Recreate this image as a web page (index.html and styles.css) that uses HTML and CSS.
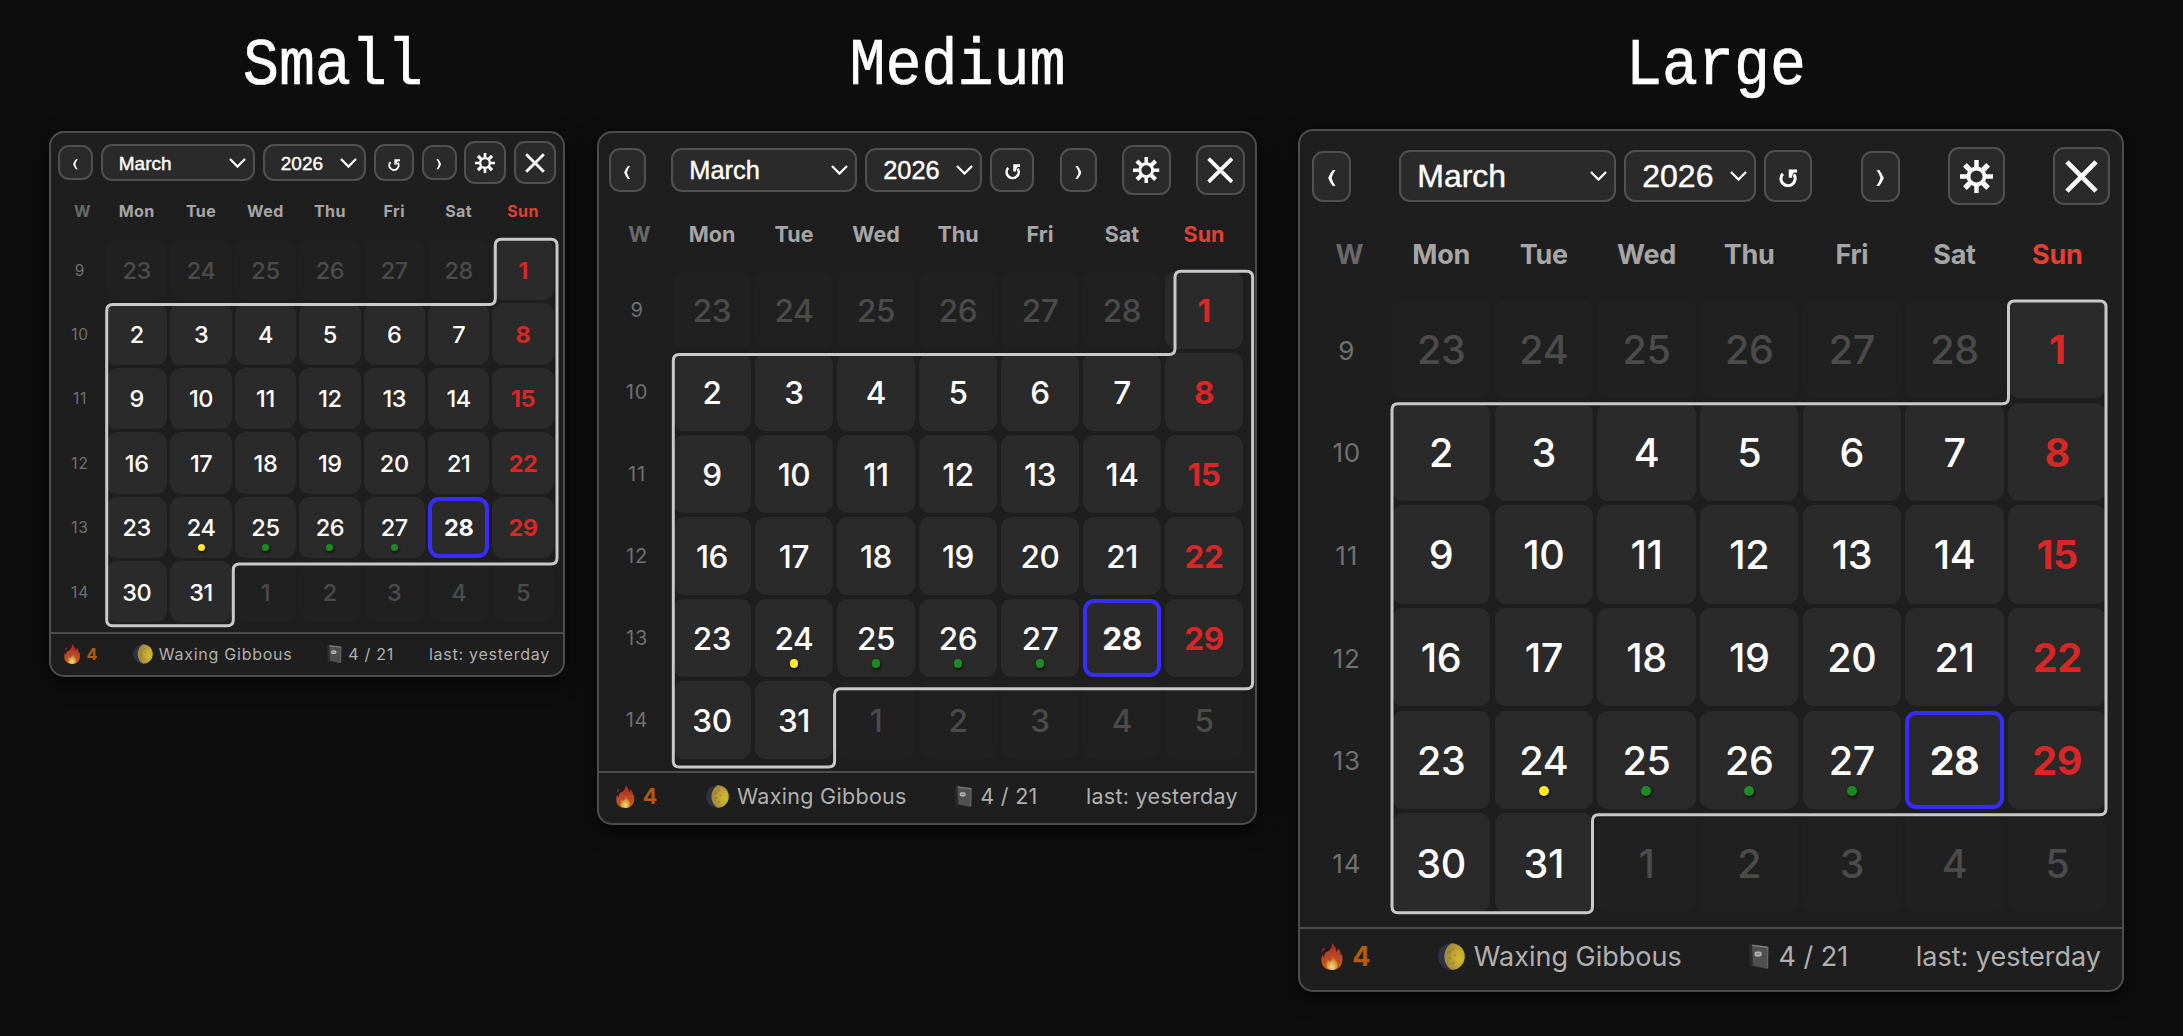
FILE: index.html
```html
<!DOCTYPE html>
<html lang="en">
<head>
  <meta charset="UTF-8" />
  <meta name="viewport" content="width=device-width, initial-scale=1.0"/>
  <title>Calendar sizes</title>
  <link rel="stylesheet" href="styles.css">
</head>
<body>
  <!-- Icon sprite -->
  <svg class="sprite" aria-hidden="true">
    <defs>
      <linearGradient id="flame-fill" x1="0" y1="0" x2="0" y2="1">
        <stop offset="0" stop-color="#a82316"/>
        <stop offset="0.45" stop-color="#b8432a"/>
        <stop offset="0.75" stop-color="#c4501c"/>
        <stop offset="1" stop-color="#b8561c"/>
      </linearGradient>
      <radialGradient id="flame-core" cx="0.5" cy="0.8" r="0.6">
        <stop offset="0" stop-color="#e8dc8a"/>
        <stop offset="0.6" stop-color="#d9a23a"/>
        <stop offset="1" stop-color="#c2602a"/>
      </radialGradient>
      <radialGradient id="moon-fill" cx="0.75" cy="0.55" r="0.6">
        <stop offset="0" stop-color="#d2bd2c"/>
        <stop offset="0.6" stop-color="#bfa234"/>
        <stop offset="1" stop-color="#a88a3c"/>
      </radialGradient>
    </defs>
    <symbol id="icon-prev" viewBox="0 0 8 16">
      <path d="M7.5 0H4.8Q1.6 4 .2 8q1.4 4 4.6 8h2.7Q4.6 12 3.6 8 4.6 4 7.5 0z" fill="currentColor"/>
    </symbol>
    <symbol id="icon-next" viewBox="0 0 8 16">
      <path d="M.5 0h2.7Q6.4 4 7.8 8 6.4 12 3.2 16H.5Q3.4 12 4.4 8 3.4 4 .5 0z" fill="currentColor"/>
    </symbol>
    <symbol id="icon-reset" viewBox="0 0 18 18">
      <path d="M3.8 4.6A7 7 0 1 0 14.6 5.4" fill="none" stroke="currentColor" stroke-width="3"/>
      <path d="M9.6.4H18v3h-3.4q-1.6 1.6-1.9 5.2H9.6z" fill="currentColor"/>
    </symbol>
    <symbol id="icon-gear" viewBox="-16.5 -16.5 33 33">
      <circle r="8" fill="none" stroke="currentColor" stroke-width="3.8"/>
      <g stroke="currentColor" stroke-width="4.4">
        <path d="M0-16.5V-8M0 8v8.5M-16.5 0H-8M8 0h8.5"/>
        <path d="M-11.6-11.6l5.2 5.2M6.4 6.4l5.2 5.2M11.6-11.6L6.4-6.4M-6.4 6.4l-5.2 5.2" stroke-width="5.2"/>
      </g>
    </symbol>
    <symbol id="icon-close" viewBox="0 0 34 34">
      <path d="M2 2l30 30M32 2L2 32" fill="none" stroke="currentColor" stroke-width="4.8"/>
    </symbol>
    <symbol id="icon-chevron" viewBox="0 0 17 10">
      <path d="M1 1l7.5 7.6L16 1" fill="none" stroke="currentColor" stroke-width="2.2"/>
    </symbol>
    <symbol id="icon-flame" viewBox="0 0 22 27">
      <path d="M11 0c3 3 4.200 5.500 4.500 9 1-1 1.300-2.500 1.200-4C20 8 19.500 10 19.800 12.500c.3-.4.8-1 1-1.700C22.500 17 21.500 27 11 27S-1 18.500 1.200 11.500c.4 1.500 1 2.500 2 3C2.500 10 5 9.500 7.500 8 10 6 11 4 11 0z" fill="url(#flame-fill)"/>
      <path d="M2 5c1.200-.5 2.500.2 2 1.600C3.200 8 1.500 8 1.200 9.600.5 7.500.8 6 2 5z" fill="#8c2018"/>
      <path d="M11.500 12c.5 4 5.500 5.500 5.300 10-.2 3.300-2.500 5-5.800 5s-6-1.800-6-5.200c0-2.500 1.200-3.800 1.300-5.800 1 .6 1.600 1.700 1.800 3 2-1.500 3.200-4 3.400-7z" fill="url(#flame-core)"/>
    </symbol>
    <symbol id="icon-moon" viewBox="0 0 27 27">
      <circle cx="13.500" cy="13.500" r="13.300" fill="#2c3444"/>
      <path d="M13.500.2a13.300 13.300 0 0 1 0 26.600C4 21 4 6 13.500.2z" fill="url(#moon-fill)"/>
      <g fill="#94792c" opacity="0.55">
        <circle cx="11.500" cy="9" r="2"/>
        <circle cx="15.500" cy="6.500" r="1.300"/>
        <circle cx="12" cy="15" r="1.500"/>
        <circle cx="17" cy="12" r="1.200"/>
        <circle cx="15" cy="20" r="1.600"/>
      </g>
    </symbol>
    <symbol id="icon-book" viewBox="0 0 20 25">
      <path d="M0 1l3-1 16 2.500L20 24l-3 1L1 22z" fill="#2c2c2c"/>
      <path d="M3 .8l16 2-.5 21.700L4 21.500z" fill="#505050"/>
      <path d="M3 .8l16 2v1.400L3 2.200z" fill="#858585"/>
      <path d="M18 3.500h1.200l-.6 20.500H17.600z" fill="#666"/>
      <rect x="5.500" y="7.500" width="7" height="5" rx="2" fill="#b5b5b5"/>
      <path d="M7 10h4" stroke="#666" stroke-width="1"/>
    </symbol>
  </svg>

  <main class="sizes" id="sizes"></main>

  <script src="script.js"></script>
</body>
</html>
```
FILE: styles.css
```css
* {
  box-sizing: border-box;
}

body {
  margin: 0;
  min-height: 1036px;
  background: #0d0d0d;
  color: #fff;
  font-family: Inter, "Liberation Sans", sans-serif;
  overflow: hidden;
}

.sprite {
  position: absolute;
  width: 0;
  height: 0;
}

.sizes {
  display: flex;
  align-items: flex-start;
  padding-left: 49px;
}

/* Sizes */
.small {
  --width: 516px;
  --title-shift: 52px;
  --card-top: 0px;
  --toolbar: 59px;
  --toolbar-pad: 7px;
  --select-font: 19px;
  --select-drop: 1px;
  --nav: 35px;
  --nav-h: 35px;
  --control-h: 37px;
  --month: 154px;
  --year: 103px;
  --reset: 40px;
  --icon-btn: 42px;
  --arrow: 5.2px;
  --reset-icon: 12px;
  --gear: 20px;
  --weekday-h: 47px;
  --weekday-pad: 9px;
  --label-font: 16px;
  --week-font: 15.5px;
  --week-col: 55px;
  --cell: 61.4px;
  --gap: 3px;
  --day-font: 23.5px;
  --day-drop: 1px;
  --dot: 7px;
  --dot-bottom: 7px;
  --body-gap: 9.5px;
  --footer-h: 43px;
  --footer-pad: 13px;
  --footer-lift: 0px;
  --emoji: 20px;
  --emoji-gap: 6px;
  --spacing: 0.75px;
}

.medium {
  --width: 660px;
  --title-shift: 61px;
  --card-top: 0px;
  --toolbar: 74px;
  --toolbar-pad: 10px;
  --select-font: 25.4px;
  --select-drop: 2px;
  --nav: 37px;
  --nav-h: 44px;
  --control-h: 44px;
  --month: 186px;
  --year: 117px;
  --reset: 44px;
  --icon-btn: 49px;
  --arrow: 6.5px;
  --reset-icon: 15.5px;
  --gear: 26.5px;
  --weekday-h: 64px;
  --weekday-pad: 10px;
  --label-font: 21.5px;
  --week-font: 20px;
  --week-col: 74px;
  --cell: 78px;
  --gap: 4px;
  --day-font: 31.5px;
  --day-drop: 0px;
  --dot: 8.5px;
  --dot-bottom: 9.5px;
  --body-gap: 12px;
  --footer-h: 52px;
  --footer-pad: 17px;
  --footer-lift: 4px;
  --emoji: 23px;
  --emoji-gap: 8px;
  --spacing: 0.3px;
  margin-left: 32px;
}

.large {
  --width: 826px;
  --title-shift: 10px;
  --card-top: -2px;
  --toolbar: 90px;
  --toolbar-pad: 12px;
  --select-font: 32px;
  --select-drop: 0px;
  --nav: 39px;
  --nav-h: 51px;
  --control-h: 52px;
  --month: 217px;
  --year: 132px;
  --reset: 48px;
  --icon-btn: 57px;
  --arrow: 8px;
  --reset-icon: 18.3px;
  --gear: 33px;
  --weekday-h: 79px;
  --weekday-pad: 13px;
  --label-font: 27px;
  --week-font: 26px;
  --week-col: 92px;
  --cell: 98.2px;
  --gap: 4.5px;
  --day-font: 39.5px;
  --day-drop: 2px;
  --dot: 10px;
  --dot-bottom: 13px;
  --body-gap: 15px;
  --footer-h: 63px;
  --footer-pad: 21px;
  --footer-lift: 6px;
  --emoji: 27px;
  --emoji-gap: 9px;
  --spacing: 0px;
  margin-left: 41px;
}

.size {
  width: var(--width);
}

/* Title */
.title {
  height: 131px;
  margin: 0 0 var(--card-top);
  padding-left: var(--title-shift);
  font: 400 60px/100px "Liberation Mono", monospace;
  -webkit-text-stroke: 0.6px #fff;
  text-align: center;
  transform: scaleY(1.12);
  transform-origin: 0 83px;
  padding-top: 18px;
}

/* Card */
.calendar {
  border: 2px solid #4d4d4d;
  border-radius: 15px;
  background: #1e1e1e;
  box-shadow: 0 6px 20px rgba(0, 0, 0, 0.6);
}

/* Toolbar */
.toolbar {
  display: flex;
  align-items: center;
  justify-content: space-between;
  height: var(--toolbar);
  padding: 0 var(--toolbar-pad);
}

.picker {
  display: flex;
  align-items: center;
  gap: 8px;
}

.control {
  display: flex;
  align-items: center;
  justify-content: center;
  height: var(--control-h);
  border: 2px solid #505050;
  border-radius: 11px;
  background: #2a2a2a;
  color: #fff;
}

.nav {
  width: var(--nav);
  height: var(--nav-h);
  padding-top: 4px;
}
.nav svg {
  width: var(--arrow);
  height: calc(var(--arrow) * 2);
}

.select {
  justify-content: space-between;
  padding: 0 7px 0 16px;
  font-family: "Liberation Sans", Arial, sans-serif;
  font-size: var(--select-font);
  line-height: 1;
  -webkit-text-stroke: 0.4px #fff;
}
.select span {
  padding-top: var(--select-drop);
}
.select svg {
  width: 17px;
  height: 10px;
}

.month {
  width: var(--month);
}
.year {
  width: var(--year);
}

.reset {
  width: var(--reset);
  padding-top: 4px;
}
.reset svg {
  width: var(--reset-icon);
  height: var(--reset-icon);
}

.icon-btn {
  width: var(--icon-btn);
  height: calc(var(--icon-btn) + 1px);
}
.icon-btn svg {
  width: var(--gear);
  height: var(--gear);
}

/* Weekday labels */
.weekdays,
.grid {
  display: grid;
  grid-template-columns: calc(var(--week-col) - var(--gap)) repeat(7, var(--cell));
  column-gap: var(--gap);
}

.weekdays {
  align-items: center;
  height: var(--weekday-h);
  padding-bottom: var(--weekday-pad);
  color: #a6a6a6;
  font-size: var(--label-font);
  font-weight: 700;
  letter-spacing: calc(var(--spacing) - 0.3px);
  text-align: center;
}
.weekdays .week {
  color: #696969;
  padding-left: 11px;
}
.weekdays .sunday {
  color: #e34035;
}

/* Day grid */
.grid {
  position: relative;
  grid-auto-rows: var(--cell);
  row-gap: var(--gap);
}

.week-number {
  display: flex;
  align-items: center;
  justify-content: center;
  padding-left: 6px;
  padding-top: var(--day-drop);
  color: #707070;
  font-size: var(--week-font);
  letter-spacing: 0.8px;
}

.day {
  position: relative;
  display: flex;
  align-items: center;
  justify-content: center;
  padding-top: var(--day-drop);
  border-radius: 11px;
  background: #2a2a2a;
  font-size: var(--day-font);
  font-weight: 500;
  letter-spacing: -0.4px;
}
.day.other {
  background: #202020;
  color: #4b4b4b;
}
.day.sunday {
  color: #d92626;
  font-weight: 700;
}
.day.sunday.other {
  color: #4b4b4b;
  font-weight: 500;
}
.day.today {
  border: 4px solid #372dff;
  font-weight: 700;
}

.dot {
  position: absolute;
  bottom: var(--dot-bottom);
  left: calc(50% - var(--dot) / 2);
  width: var(--dot);
  height: var(--dot);
  border-radius: 50%;
  background: #1d8b25;
  box-shadow: 1px 2px 3px rgba(0, 0, 0, 0.6);
}
.dot.yellow {
  background: #ffe72e;
}

/* Month outline */
.outline {
  position: absolute;
  top: 0;
  left: var(--week-col);
  width: 1px;
  height: 1px;
  overflow: visible;
  fill: none;
  stroke: #c9c9c9;
  stroke-width: 3;
  pointer-events: none;
}

/* Footer */
.footer {
  display: flex;
  align-items: center;
  justify-content: space-between;
  height: var(--footer-h);
  margin-top: var(--body-gap);
  padding: 0 var(--footer-pad) var(--footer-lift);
  border-top: 2px solid #4d4d4d;
  color: #b0b0b0;
  font-size: var(--label-font);
  letter-spacing: var(--spacing);
  white-space: nowrap;
}

.stat {
  display: flex;
  align-items: center;
  gap: var(--emoji-gap);
}
.stat svg {
  height: var(--emoji);
}
.stat .flame {
  width: calc(var(--emoji) * 0.82);
}
.stat .moon {
  width: var(--emoji);
}
.stat .book {
  width: calc(var(--emoji) * 0.75);
}

.streak {
  color: #b35c0c;
  font-weight: 700;
}
```
FILE: script.js
```js
const days = ["Mon", "Tue", "Wed", "Thu", "Fri", "Sat", "Sun"];
const marks = { 24: "yellow", 25: "green", 26: "green", 27: "green" };
const today = 28;

// outline: x and y stops of the month border, relative to the first cell
const sizes = [
  { id: "small",  title: "Small",  x: [0.7, 127.3, 389.3, 451],   y: [0.3, 65.5, 325, 386.7] },
  { id: "medium", title: "Medium", x: [0.3, 161.6, 502, 579.6],   y: [0.3, 83.5, 417.7, 496] },
  { id: "large",  title: "Large",  x: [0, 200.5, 616.5, 714],     y: [1, 103.7, 514.7, 612.7] },
];

function icon(name, cls = "") {
  return `<svg class="${cls}" preserveAspectRatio="none"><use href="#icon-${name}"/></svg>`;
}

function outline({ x, y }) {
  const r = 6;
  const d = `M${x[2] + r} ${y[0]} H${x[3] - r} q${r} 0 ${r} ${r}
    V${y[2] - r} q0 ${r} ${-r} ${r} H${x[1] + r} q${-r} 0 ${-r} ${r}
    V${y[3] - r} q0 ${r} ${-r} ${r} H${x[0] + r} q${-r} 0 ${-r} ${-r}
    V${y[1] + r} q0 ${-r} ${r} ${-r} H${x[2] - r} q${r} 0 ${r} ${-r}
    V${y[0] + r} q0 ${-r} ${r} ${-r} z`;
  return `<svg class="outline"><path d="${d}"/></svg>`;
}

function dayCell(index) {
  // March 2026 starts on the Sunday of the first row
  const n = index - 5;
  const inMonth = n >= 1 && n <= 31;
  const label = n < 1 ? n + 28 : n > 31 ? n - 31 : n;
  const cls = ["day"];
  if (!inMonth) cls.push("other");
  if (index % 7 === 6) cls.push("sunday");
  if (n === today) cls.push("today");
  const dot = inMonth && marks[n] ? `<span class="dot ${marks[n]}"></span>` : "";
  return `<div class="${cls.join(" ")}">${label}${dot}</div>`;
}

function grid() {
  let html = "";
  for (let row = 0; row < 6; row++) {
    html += `<div class="week-number">${row + 9}</div>`;
    for (let col = 0; col < 7; col++) html += dayCell(row * 7 + col);
  }
  return html;
}

document.getElementById("sizes").innerHTML = sizes.map((size) => `
  <section class="size ${size.id}">
    <h2 class="title">${size.title}</h2>
    <div class="calendar">
      <div class="toolbar">
        <div class="control nav">${icon("prev")}</div>
        <div class="picker">
          <div class="control select month"><span>March</span>${icon("chevron")}</div>
          <div class="control select year"><span>2026</span>${icon("chevron")}</div>
          <div class="control reset">${icon("reset")}</div>
        </div>
        <div class="control nav">${icon("next")}</div>
        <div class="control icon-btn">${icon("gear")}</div>
        <div class="control icon-btn">${icon("close")}</div>
      </div>
      <div class="weekdays">
        <span class="week">W</span>
        ${days.map((d) => `<span class="${d === "Sun" ? "sunday" : ""}">${d}</span>`).join("")}
      </div>
      <div class="grid">${grid()}${outline(size)}</div>
      <div class="footer">
        <div class="stat streak">${icon("flame", "flame")}4</div>
        <div class="stat">${icon("moon", "moon")}Waxing Gibbous</div>
        <div class="stat">${icon("book", "book")}4 / 21</div>
        <div class="stat">last: yesterday</div>
      </div>
    </div>
  </section>`).join("");
```
